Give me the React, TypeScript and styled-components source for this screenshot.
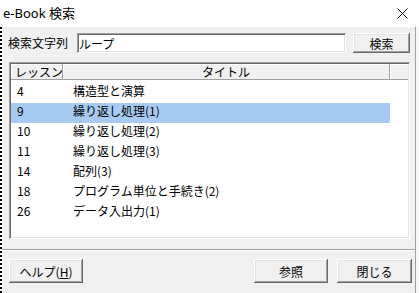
import React from "react";
import styled, { createGlobalStyle } from "styled-components";

const Global = createGlobalStyle`
  html, body { margin: 0; padding: 0; background: #f0f0f0; }
  body {
    font-family: "Noto Sans CJK JP", "Noto Sans", sans-serif;
    font-size: 12px;
    color: #000;
  }
  #root { width: 419px; height: 293px; overflow: hidden; }
`;

const Screen = styled.div`
  width: 419px;
  height: 293px;
  display: flex;
  flex-direction: column;
  background: #f0f0f0;
  overflow: hidden;
`;

const TitleBar = styled.div`
  flex: none;
  height: 27px;
  background: #fff;
  display: flex;
  align-items: center;
  justify-content: space-between;
  padding: 0 11px 0 3px;
`;

const TitleText = styled.span`
  font-family: "Noto Sans", "Noto Sans CJK JP", sans-serif;
  font-size: 13px;
  line-height: 27px;
  color: #000;
`;

const Frame = styled.div`
  flex: 1;
  display: flex;
  min-height: 0;
`;

const LeftEdge = styled.div`
  flex: none;
  width: 2px;
  background: repeating-linear-gradient(to bottom, #000 0 2px, #fff 2px 4px);
`;

const RightEdge = styled.div`
  flex: none;
  width: 3px;
  background: #f7f7f7;
`;

const Client = styled.div`
  flex: none;
  width: 414px;
  box-sizing: border-box;
  border-right: 1px solid #a0a0a0;
  padding: 6px 4px 0 7px;
  display: flex;
  flex-direction: column;
`;

const SearchRow = styled.div`
  display: flex;
  align-items: center;
  height: 20px;
`;

const Label = styled.span`
  flex: none;
  width: 68px;
  line-height: 20px;
  margin-left: -1px;
`;

const TextInput = styled.input`
  flex: none;
  width: 269px;
  height: 20px;
  box-sizing: border-box;
  margin: 0 0 0 1px;
  padding: 0 2px;
  border: none;
  outline: none;
  background: #fff;
  font-family: "Noto Sans CJK JP", sans-serif;
  font-size: 12px;
  color: #000;
  box-shadow: inset 1px 1px #a0a0a0, inset -1px -1px #fff, inset 2px 2px #696969,
    inset -2px -2px #e3e3e3;
`;

const Button = styled.button<{ $w: number; $h: number }>`
  flex: none;
  width: ${(p) => p.$w}px;
  height: ${(p) => p.$h}px;
  box-sizing: border-box;
  padding: 0;
  margin: 0;
  border: none;
  background: #f0f0f0;
  font-family: "Noto Sans CJK JP", sans-serif;
  font-size: 12px;
  color: #000;
  box-shadow: inset -1px -1px #696969, inset 1px 1px #fff, inset -2px -2px #a0a0a0,
    inset 2px 2px #e3e3e3;
  display: flex;
  align-items: center;
  justify-content: center;
`;

const SearchButton = styled(Button)`
  margin-left: 7px;
`;

const ListBox = styled.div`
  margin-top: 9px;
  margin-right: 1px;
  height: 177px;
  box-sizing: border-box;
  padding: 2px;
  background: #fff;
  box-shadow: inset 1px 1px #a0a0a0, inset -1px -1px #fff, inset 2px 2px #696969,
    inset -2px -2px #e3e3e3;
  display: flex;
  flex-direction: column;
  overflow: hidden;
`;

const Header = styled.div`
  flex: none;
  display: grid;
  grid-template-columns: 52px 327px 1fr;
  height: 15px;
  background: #f0f0f0;
  border-bottom: 1px solid #a0a0a0;
`;

const HeaderCell = styled.div<{ $align: "left" | "center" }>`
  border-right: 1px solid #a0a0a0;
  box-shadow: inset 1px 1px #fff;
  text-align: ${(p) => p.$align};
  padding-left: ${(p) => (p.$align === "left" ? 4 : 0)}px;
  line-height: 15px;
  font-size: 12px;
  white-space: nowrap;
  overflow: hidden;
`;

const HeaderFill = styled.div`
  box-shadow: inset 1px 1px #fff;
`;

const Rows = styled.div`
  padding-top: 3px;
  display: flex;
  flex-direction: column;
`;

const Row = styled.div<{ $selected?: boolean }>`
  display: grid;
  grid-template-columns: 52px 327px;
  width: 379px;
  height: 20px;
  background: ${(p) => (p.$selected ? "#a6caf0" : "transparent")};
`;

const NumCell = styled.div`
  padding-left: 6px;
  padding-top: 1px;
  line-height: 14px;
  white-space: nowrap;
`;

const TitleCell = styled.div`
  padding-left: 10px;
  padding-top: 1px;
  line-height: 14px;
  white-space: nowrap;
`;

const Separator = styled.div`
  margin-top: 10px;
  margin-left: -7px;
  margin-right: -4px;
  border-top: 1px solid #a0a0a0;
  border-bottom: 1px solid #fff;
`;

const ButtonRow = styled.div`
  margin-top: 8px;
  margin-right: -1px;
  display: flex;
  align-items: center;
  gap: 9px;
`;

const Spacer = styled.div`
  flex: 1;
`;

const Underlined = styled.span`
  text-decoration: underline;
`;

const CloseIcon = () => (
  <svg width="11" height="11" viewBox="0 0 11 11">
    <path d="M0.5 0.5 L10.5 10.5 M10.5 0.5 L0.5 10.5" stroke="#111" strokeWidth="1" fill="none" />
  </svg>
);

const lessons = [
  { no: "4", title: "構造型と演算" },
  { no: "9", title: "繰り返し処理(1)", selected: true },
  { no: "10", title: "繰り返し処理(2)" },
  { no: "11", title: "繰り返し処理(3)" },
  { no: "14", title: "配列(3)" },
  { no: "18", title: "プログラム単位と手続き(2)" },
  { no: "26", title: "データ入出力(1)" },
];

export default function App() {
  return (
    <>
      <Global />
      <Screen>
        <TitleBar>
          <TitleText>e-Book 検索</TitleText>
          <CloseIcon />
        </TitleBar>
        <Frame>
          <LeftEdge />
          <Client>
            <SearchRow>
              <Label>検索文字列</Label>
              <TextInput defaultValue="ループ" readOnly />
              <SearchButton $w={57} $h={20}>検索</SearchButton>
            </SearchRow>
            <ListBox>
              <Header>
                <HeaderCell $align="left">レッスン</HeaderCell>
                <HeaderCell $align="center">タイトル</HeaderCell>
                <HeaderFill />
              </Header>
              <Rows>
                {lessons.map((l) => (
                  <Row key={l.no} $selected={l.selected}>
                    <NumCell>{l.no}</NumCell>
                    <TitleCell>{l.title}</TitleCell>
                  </Row>
                ))}
              </Rows>
            </ListBox>
            <Separator />
            <ButtonRow>
              <Button $w={74} $h={24}>
                ヘルプ(<Underlined>H</Underlined>)
              </Button>
              <Spacer />
              <Button $w={74} $h={24}>参照</Button>
              <Button $w={75} $h={24}>閉じる</Button>
            </ButtonRow>
          </Client>
          <RightEdge />
        </Frame>
      </Screen>
    </>
  );
}
